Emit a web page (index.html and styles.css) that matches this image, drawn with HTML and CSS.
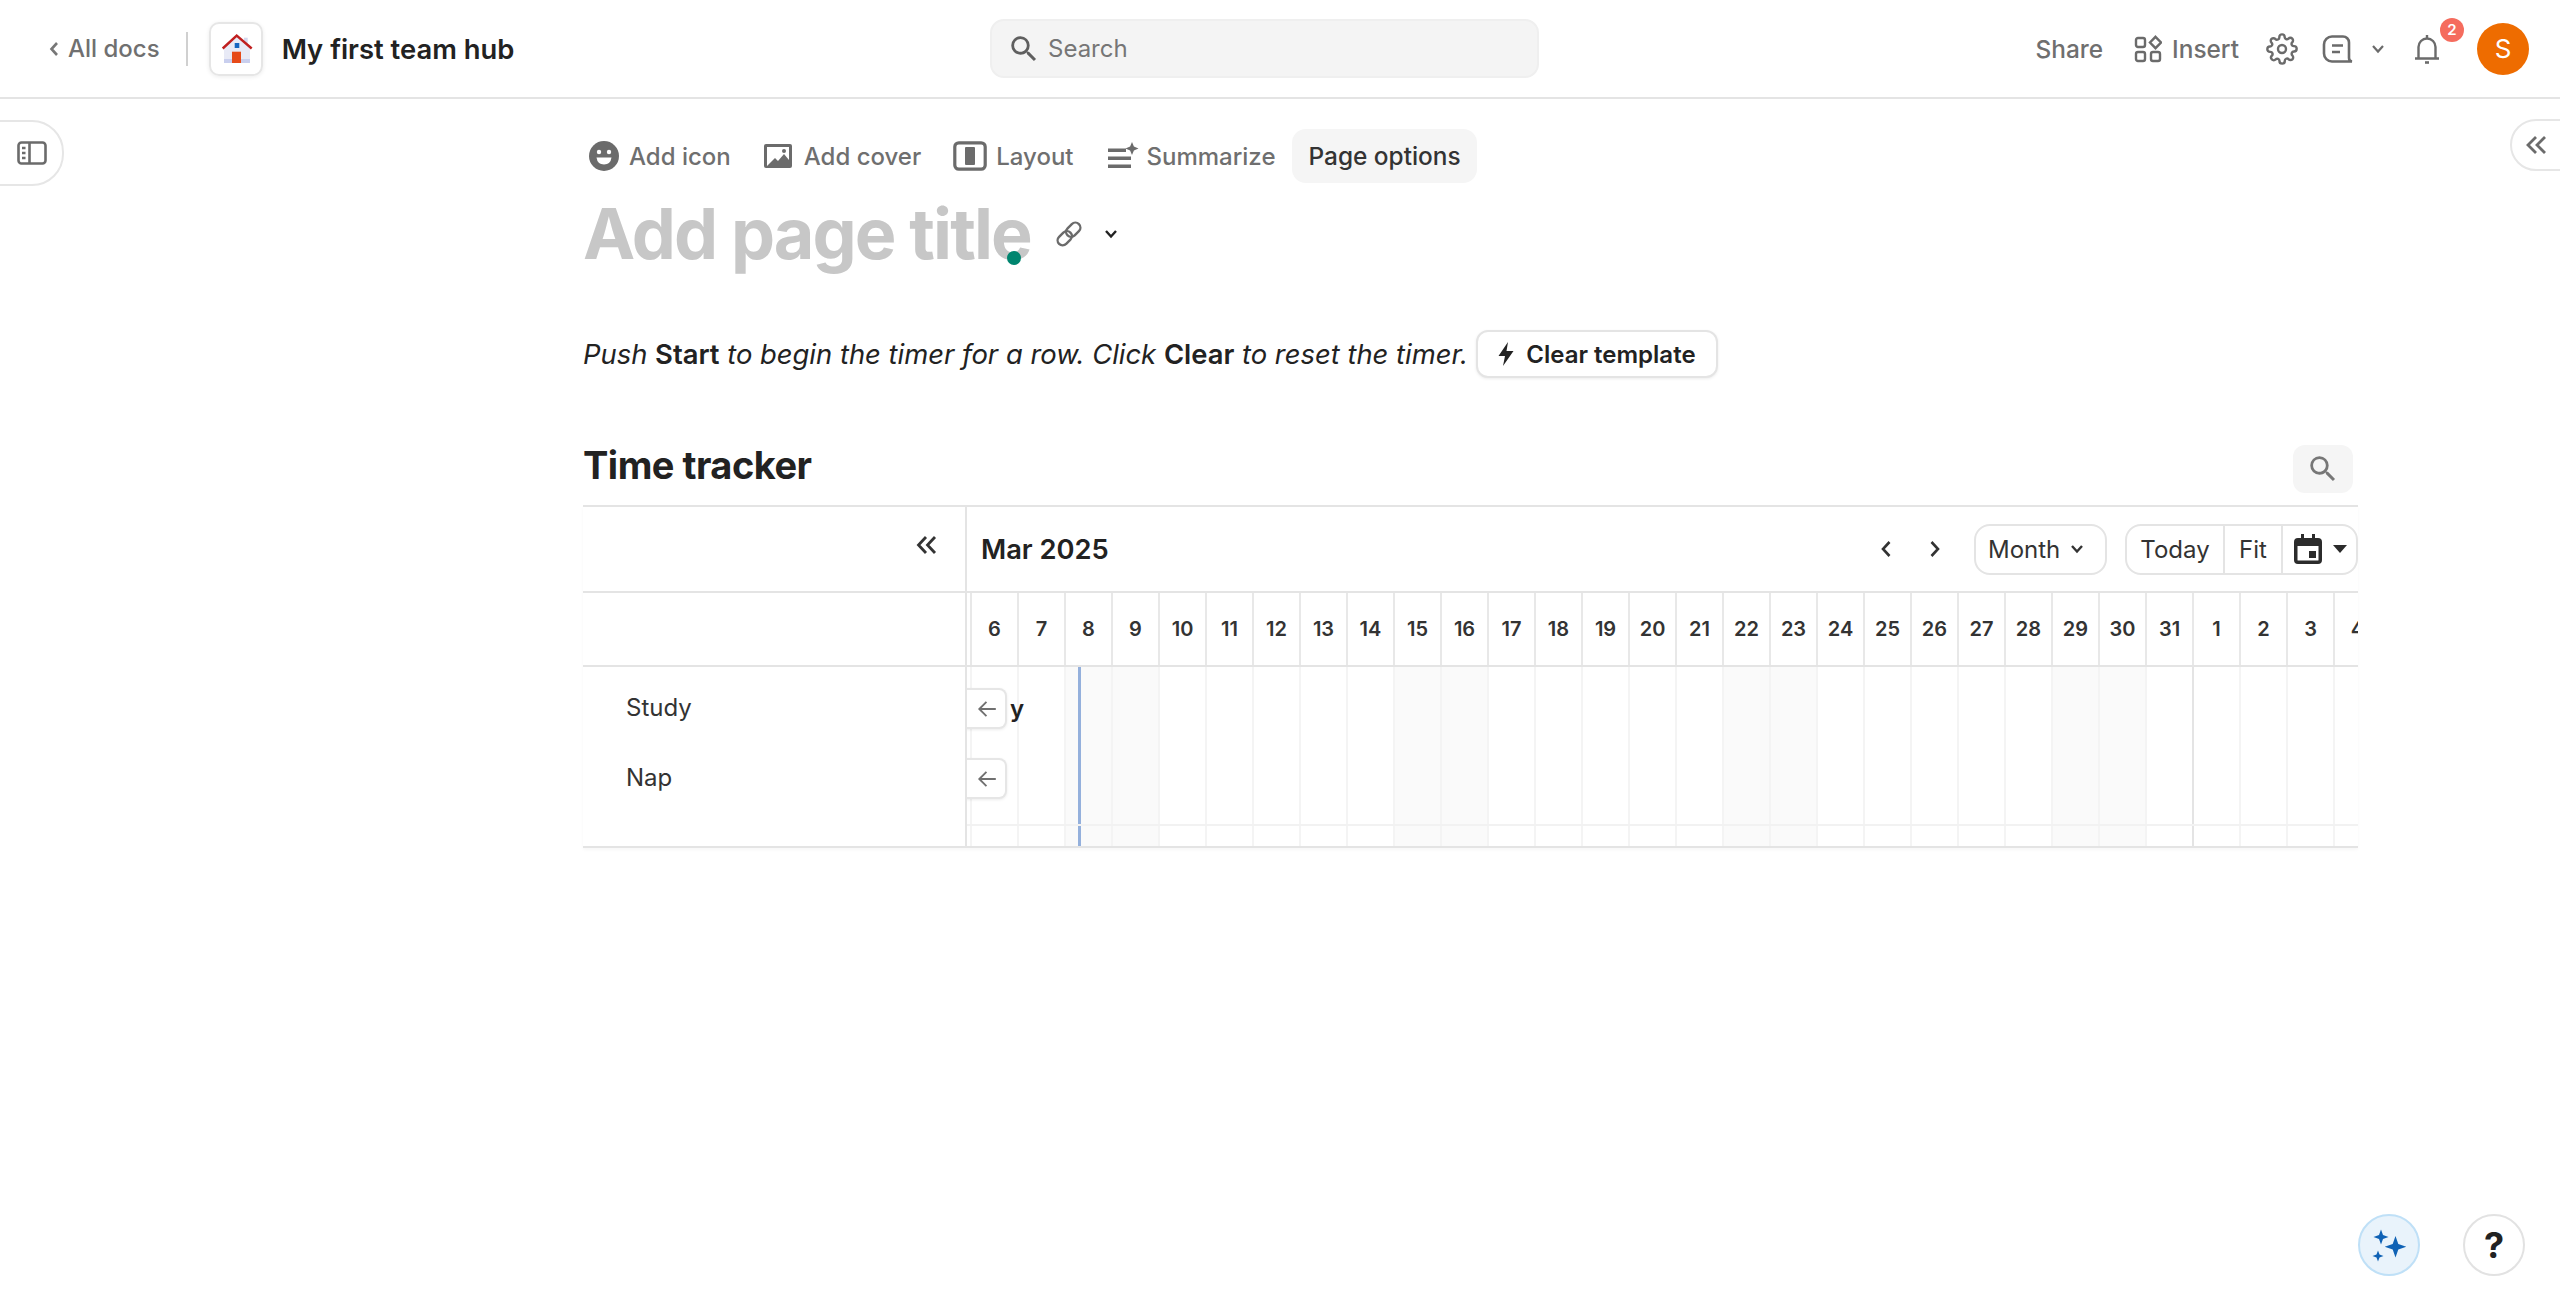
FILE: index.html
```html
<!DOCTYPE html>
<html lang="en">
<head>
  <title>Time tracker - My first team hub</title>
  <meta charset="utf-8">
  <link rel="stylesheet" href="styles.css">
</head>
<body>

<header class="topbar">
  <div class="top-left">
    <svg class="back-chev" width="12" height="18" viewBox="0 0 12 18"><path d="M9 3 L3.500 9 L9 15" fill="none" stroke="#777" stroke-width="2.600"/></svg>
    <span class="all-docs">All docs</span>
    <span class="top-sep"></span>
    <span class="doc-icon">
      <svg width="34" height="34" viewBox="0 0 34 34">
        <path d="M25 5.700h3.700V12H25z" fill="#d5d8ee"/>
        <path d="M5 16 L17.700 3 L31 16 V31 H5z" fill="#e8eaf6"/>
        <path d="M5 27h26v4H5z" fill="#c9cfee"/>
        <path d="M3.700 16.500 L17.700 3.500 L32.700 16.500" fill="none" stroke="#c01f1f" stroke-width="2.400"/>
        <path d="M15.700 11h4.600v5h-4.600z" fill="#1565c0"/>
        <path d="M13 19.700h9V31h-9z" fill="#e64a19"/>
      </svg>
    </span>
    <span class="doc-name">My first team hub</span>
  </div>

  <div class="top-search">
    <svg width="34" height="34" viewBox="0 0 24 24"><path d="M15.500 14h-.79l-.28-.27A6.470 6.470 0 0 0 16 9.500 6.500 6.500 0 1 0 9.500 16c1.610 0 3.090-.59 4.230-1.570l.27.28v.79l5 4.990L20.490 19l-4.990-5zm-6 0C7.010 14 5 11.990 5 9.500S7.010 5 9.500 5 14 7.010 14 9.500 11.990 14 9.500 14z" fill="#5f5f5f"/></svg>
    <span>Search</span>
  </div>

  <div class="top-right">
    <span class="share">Share</span>
    <span class="insert">
      <svg width="28" height="28" viewBox="0 0 28 28" fill="none" stroke="#6b6b6b" stroke-width="2.400">
        <rect x="2" y="3" width="9" height="9" rx="2"/>
        <rect x="2" y="17" width="9" height="9" rx="2"/>
        <rect x="17" y="17" width="9" height="9" rx="2"/>
        <path d="M21.500 1.800 L27 7.500 L21.500 13.200 L16 7.500z"/>
      </svg>
      Insert
    </span>
    <svg class="gear" width="32" height="32" viewBox="0 0 24 24" fill="none" stroke="#6b6b6b" stroke-width="1.800" stroke-linejoin="round"><circle cx="12" cy="12" r="3"/><path d="M19.400 15a1.650 1.650 0 0 0 .33 1.820l.06.06a2 2 0 1 1-2.830 2.830l-.06-.06a1.650 1.650 0 0 0-2.800 1.170V21a2 2 0 1 1-4 0v-.09a1.650 1.650 0 0 0-2.800-1.120l-.06.06a2 2 0 1 1-2.830-2.830l.06-.06a1.650 1.650 0 0 0-1.120-2.800H3a2 2 0 1 1 0-4h.09a1.650 1.650 0 0 0 1.120-2.800l-.06-.06a2 2 0 1 1 2.830-2.830l.06.06a1.650 1.650 0 0 0 1.820.33H9a1.650 1.650 0 0 0 1-1.510V3a2 2 0 1 1 4 0v.09a1.650 1.650 0 0 0 2.800 1.120l.06-.06a2 2 0 1 1 2.830 2.830l-.06.06a1.650 1.650 0 0 0 1.120 2.800H21a2 2 0 1 1 0 4h-.09a1.650 1.650 0 0 0-1.510 1z"/></svg>
    <svg class="comment" width="32" height="28" viewBox="0 0 32 28" fill="none" stroke="#6b6b6b" stroke-width="2.600"><path d="M10 1.500h11a6 6 0 0 1 6 6V23q0 3 3 3.500H10a8 8 0 0 1-8-8V9.500a8 8 0 0 1 8-8z"/><path d="M10 10.500h11M10 17h8"/></svg>
    <svg class="small-chev" width="14" height="10" viewBox="0 0 14 10"><path d="M2 2 L7 7.500 L12 2" fill="none" stroke="#6b6b6b" stroke-width="2.200"/></svg>
    <span class="bell">
      <svg width="26" height="30" viewBox="0 0 26 30" fill="none" stroke="#6b6b6b" stroke-width="2.400"><path d="M1 24.500h24M4.500 24.500V13a8.500 8.500 0 0 1 17 0v11.500"/><path d="M13 1v3"/><path d="M11 28.500h4" stroke-width="2.600"/></svg>
      <span class="badge">2</span>
    </span>
    <span class="avatar">S</span>
  </div>
</header>

<button class="side-tab side-tab-left">
  <svg width="30" height="24" viewBox="0 0 30 24" fill="none" stroke="#6b6b6b" stroke-width="2.600"><rect x="1.500" y="1.500" width="27" height="21" rx="3"/><path d="M12.500 1.500v21"/><path d="M5 7h3.500M5 12h3.500M5 17h3.500"/></svg>
</button>
<button class="side-tab side-tab-right">
  <svg width="24" height="20" viewBox="0 0 24 20" fill="none" stroke="#6b6b6b" stroke-width="2.800"><path d="M11 2 L3 10 L11 18M20 2 L12 10 L20 18"/></svg>
</button>

<main class="page">
  <nav class="page-tools">
    <span class="tool tool-icon">
      <svg width="30" height="30" viewBox="0 0 30 30"><circle cx="15" cy="15" r="15" fill="#6b6b6b"/><circle cx="10" cy="11" r="2.200" fill="#fff"/><circle cx="20" cy="11" r="2.200" fill="#fff"/><path d="M7.500 16.500h15q-1 7-7.500 7t-7.500-7z" fill="#fff"/></svg>
      Add icon
    </span>
    <span class="tool tool-cover">
      <svg width="30" height="26" viewBox="0 0 30 26"><path d="M3 1h24a2 2 0 0 1 2 2v20a2 2 0 0 1-2 2H3a2 2 0 0 1-2-2V3a2 2 0 0 1 2-2z" fill="#6b6b6b"/><path d="M4 4h22v13l-5-6-6 7-3-3-8 8z" fill="#fff"/><circle cx="21" cy="8" r="2" fill="#6b6b6b"/></svg>
      Add cover
    </span>
    <span class="tool tool-layout">
      <svg width="34" height="30" viewBox="0 0 34 30" fill="none"><rect x="1.800" y="1.800" width="30.400" height="26.400" rx="4" stroke="#6b6b6b" stroke-width="3.200"/><rect x="12" y="6" width="10" height="18" rx="1" fill="#6b6b6b"/></svg>
      Layout
    </span>
    <span class="tool tool-sum">
      <svg width="32" height="28" viewBox="0 0 32 28" fill="#6b6b6b"><path d="M1 6.500h18V10H1zM1 14.500h23V18H1zM1 22.500h23V26H1z"/><path d="M25 0l1.900 4.600L31.500 6.500l-4.600 1.900L25 13l-1.900-4.600L18.500 6.500l4.600-1.900z"/></svg>
      Summarize
    </span>
    <span class="tool tool-active">Page options</span>
  </nav>

  <div class="title-row">
    <h1 class="page-title">Add page title<span class="caret-dot"></span></h1>
    <svg class="title-link" width="30" height="30" viewBox="0 0 30 30" fill="none" stroke="#6b6b6b" stroke-width="2.400"><g transform="rotate(-45 15 15)"><rect x="1" y="10" width="16" height="10" rx="5"/><rect x="13" y="10" width="16" height="10" rx="5"/></g></svg>
    <svg class="title-chev" width="14" height="10" viewBox="0 0 14 10"><path d="M2 2 L7 7.500 L12 2" fill="none" stroke="#222" stroke-width="2.400"/></svg>
  </div>

  <div class="intro">
    <p><em>Push <b>Start</b> to begin the timer for a row. Click <b>Clear</b> to reset the timer.</em></p>
    <button class="clear-btn">
      <svg width="16" height="24" viewBox="0 0 16 24"><path d="M10 0 L0.500 14 H7 L5 24 L15.500 9 H8.500z" fill="#222"/></svg>
      Clear template
    </button>
  </div>

  <section class="tracker">
    <div class="tracker-head">
      <h2>Time tracker</h2>
      <span class="tracker-search">
        <svg width="34" height="34" viewBox="0 0 24 24"><path d="M15.500 14h-.79l-.28-.27A6.470 6.470 0 0 0 16 9.500 6.500 6.500 0 1 0 9.500 16c1.610 0 3.090-.59 4.230-1.570l.27.28v.79l5 4.990L20.490 19l-4.990-5zm-6 0C7.010 14 5 11.990 5 9.500S7.010 5 9.500 5 14 7.010 14 9.500 11.990 14 9.500 14z" fill="#777"/></svg>
      </span>
    </div>

    <div class="gantt">
      <div class="gantt-left">
        <div class="left-head">
          <svg width="22" height="20" viewBox="0 0 22 20" fill="none" stroke="#333" stroke-width="2.800"><path d="M10 2 L2.500 10 L10 18M19 2 L11.500 10 L19 18"/></svg>
        </div>
        <div class="left-days"></div>
        <div class="left-rows">
          <div class="left-row">Study</div>
          <div class="left-row">Nap</div>
        </div>
      </div>

      <div class="gantt-right">
        <div class="gantt-bar">
          <span class="month-label">Mar 2025</span>
          <svg class="nav-chev" width="14" height="20" viewBox="0 0 14 20"><path d="M10.500 3 L4 10 L10.500 17" fill="none" stroke="#333" stroke-width="2.600"/></svg>
          <svg class="nav-chev nav-next" width="14" height="20" viewBox="0 0 14 20"><path d="M3.500 3 L10 10 L3.500 17" fill="none" stroke="#333" stroke-width="2.600"/></svg>
          <span class="bar-btn month-btn">Month
            <svg width="14" height="10" viewBox="0 0 14 10"><path d="M2 2 L7 7.500 L12 2" fill="none" stroke="#333" stroke-width="2.400"/></svg>
          </span>
          <span class="bar-btn btn-group">
            <span class="seg seg-today">Today</span>
            <span class="seg seg-fit">Fit</span>
            <span class="seg seg-cal">
              <svg width="28" height="30" viewBox="0 0 28 30"><path d="M7 0h3v4h8V0h3v4h3a4 4 0 0 1 4 4v18a4 4 0 0 1-4 4H4a4 4 0 0 1-4-4V8a4 4 0 0 1 4-4h3zM3.500 12v14a.5.5 0 0 0 .5.500h20a.5.5 0 0 0 .5-.5V12zM15 17h7v7h-7z" fill="#2b2b2b"/></svg>
              <svg width="16" height="9" viewBox="0 0 16 9"><path d="M1 0h14l-7 8z" fill="#2b2b2b"/></svg>
            </span>
          </span>
        </div>

        <div class="days">
          <span>6</span><span>7</span><span>8</span><span>9</span><span>10</span><span>11</span><span>12</span><span>13</span><span>14</span><span>15</span><span>16</span><span>17</span><span>18</span><span>19</span><span>20</span><span>21</span><span>22</span><span>23</span><span>24</span><span>25</span><span>26</span><span>27</span><span>28</span><span>29</span><span>30</span><span>31</span><span class="month-start">1</span><span>2</span><span>3</span><span>4</span>
        </div>

        <div class="grid">
          <i></i><i></i><i class="off"></i><i class="off"></i><i></i><i></i><i></i><i></i><i></i><i class="off"></i><i class="off"></i><i></i><i></i><i></i><i></i><i></i><i class="off"></i><i class="off"></i><i></i><i></i><i></i><i></i><i></i><i class="off"></i><i class="off"></i><i></i><i class="month-start"></i><i></i><i></i><i></i>
          <span class="today-line"></span>
          <span class="grid-foot"></span>
          <span class="bar-label">y</span>
          <button class="jump jump-study"><svg width="22" height="22" viewBox="0 0 20 20" fill="none" stroke="#707070" stroke-width="1.700"><path d="M18 10H3M9.500 3.500 L3 10 L9.500 16.500"/></svg></button>
          <button class="jump jump-nap"><svg width="22" height="22" viewBox="0 0 20 20" fill="none" stroke="#707070" stroke-width="1.700"><path d="M18 10H3M9.500 3.500 L3 10 L9.500 16.500"/></svg></button>
        </div>
      </div>
    </div>
  </section>
</main>

<button class="float-btn float-ai">
  <svg width="38" height="36" viewBox="0 0 38 36" fill="#0f62b5"><path d="M25.500 9l2.800 8 8 2.700-8 2.800-2.800 8-2.800-8-8-2.800 8-2.700zM11 2.500l2 5.500 5.500 2-5.500 2-2 5.500-2-5.500-5.500-2 5.500-2zM8 23.500l1.500 4 4 1.500-4 1.500-1.500 4-1.500-4-4-1.500 4-1.500z"/></svg>
</button>
<button class="float-btn float-help">?</button>

</body>
</html>
```

FILE: styles.css
```css
html {
  height: 100%;
}
body {
  margin: 0;
  height: 1314px;
  overflow: hidden;
  background: #ffffff;
  color: #222222;
  font-family: Inter, "Noto Sans", sans-serif;
  font-size: 24px;
}

button {
  font-family: inherit;
  padding: 0;
  background: #fff;
  cursor: pointer;
}

/* top bar */

.topbar {
  height: 97px;
  border-bottom: 2px solid #e4e4e4;
  display: flex;
  align-items: center;
  position: relative;
}

.top-left {
  display: flex;
  align-items: center;
  padding-left: 48px;
  width: 990px;
  box-sizing: border-box;
}

.back-chev {
  margin-right: 8px;
}

.all-docs {
  font-weight: 500;
  color: #707070;
}

.top-sep {
  width: 2px;
  height: 34px;
  background: #d0d0d0;
  margin: 0 21px 0 26px;
}

.doc-icon {
  width: 54px;
  height: 54px;
  box-sizing: border-box;
  border: 2px solid #e6e6e6;
  border-radius: 10px;
  box-shadow: 0 1px 4px rgba(0,0,0,0.08);
  display: flex;
  align-items: center;
  justify-content: center;
}

.doc-name {
  font-size: 27.4px;
  font-weight: 600;
  margin-left: 19px;
}

.top-search {
  width: 549px;
  height: 59px;
  box-sizing: border-box;
  background: #f4f4f4;
  border: 2px solid #efefef;
  border-radius: 14px;
  display: flex;
  align-items: center;
  gap: 7px;
  padding-left: 15px;
  color: #767676;
}

.top-right {
  flex: 1;
  display: flex;
  align-items: center;
  justify-content: flex-end;
  padding-right: 31px;
  color: #6f6f6f;
  font-size: 24.4px;
  font-weight: 500;
}

.share {
  margin-right: 31px;
}

.insert {
  display: flex;
  align-items: center;
  gap: 10px;
  margin-right: 27px;
}

.comment {
  margin-left: 24px;
}

.small-chev {
  margin-left: 17px;
}

.bell {
  margin-left: 29px;
  display: flex;
  position: relative;
}

.badge {
  position: absolute;
  top: -16px;
  left: 26px;
  width: 24px;
  height: 24px;
  border-radius: 50%;
  background: #f56c5e;
  color: #fff;
  font-size: 15px;
  font-weight: 600;
  line-height: 24px;
  text-align: center;
}

.avatar {
  margin-left: 37px;
  width: 52px;
  height: 52px;
  border-radius: 50%;
  background: #ee6c00;
  color: #fff;
  font-size: 26px;
  font-weight: 400;
  line-height: 52px;
  text-align: center;
}

/* side tabs */

.side-tab {
  position: absolute;
  border: 2px solid #e6e6e6;
  display: flex;
  align-items: center;
}

.side-tab-left {
  top: 120px;
  left: -2px;
  width: 66px;
  height: 66px;
  border-radius: 0 32px 32px 0;
  padding-left: 17px;
}

.side-tab-right {
  top: 119px;
  left: 2510px;
  width: 60px;
  height: 52px;
  border-radius: 26px 0 0 26px;
  padding-left: 13px;
}

/* page */

.page {
  margin-left: 583px;
  width: 1775px;
}

.page-tools {
  display: flex;
  align-items: center;
  height: 54px;
  margin-top: 30px;
  color: #6f6f6f;
  font-size: 24px;
  font-weight: 500;
}

.tool {
  display: flex;
  align-items: center;
  gap: 11px;
}

.tool-icon {
  margin-left: 6px;
  gap: 10px;
}

.tool-cover {
  margin-left: 32px;
}

.tool-layout {
  margin-left: 32px;
  gap: 9px;
}

.tool-sum {
  margin-left: 33px;
  gap: 8px;
}

.tool-active {
  margin-left: 17px;
  height: 54px;
  padding: 0 16px;
  background: #f5f5f5;
  border-radius: 14px;
  color: #333;
  font-size: 24.4px;
}

.title-row {
  display: flex;
  align-items: center;
  height: 86px;
  margin-top: 8px;
}

.page-title {
  margin: 0;
  position: relative;
  font-size: 70px;
  font-weight: 700;
  letter-spacing: -1.9px;
  color: #c7c7c7;
  line-height: 86px;
}

.caret-dot {
  position: absolute;
  right: 10px;
  top: 60px;
  width: 14px;
  height: 14px;
  border-radius: 50%;
  background: #00856f;
}

.title-link {
  margin-left: 23px;
}

.title-chev {
  margin-left: 20px;
}

.intro {
  display: flex;
  align-items: center;
  gap: 8px;
  height: 48px;
  margin-top: 53px;
}

.intro p {
  margin: 0;
  font-size: 27.4px;
}

.intro b {
  font-style: normal;
  font-weight: 600;
}

.clear-btn {
  width: 242px;
  height: 48px;
  border: 2px solid #e4e4e4;
  border-radius: 12px;
  box-shadow: 0 1px 3px rgba(0,0,0,0.08);
  display: flex;
  align-items: center;
  justify-content: center;
  gap: 12px;
  color: #222;
  font-size: 24px;
  font-weight: 600;
}

.tracker {
  margin-top: 67px;
}

.tracker-head {
  display: flex;
  align-items: center;
  justify-content: space-between;
  height: 48px;
  margin-bottom: 12px;
}

.tracker-head h2 {
  margin: 0 0 8px;
  font-size: 38px;
  font-weight: 700;
  letter-spacing: -0.5px;
}

.tracker-search {
  width: 60px;
  height: 48px;
  margin-right: 5px;
  background: #f5f5f5;
  border-radius: 12px;
  display: flex;
  align-items: center;
  justify-content: center;
}

/* gantt */

.gantt {
  display: flex;
  border-top: 2px solid #e4e4e4;
  border-bottom: 2px solid #e4e4e4;
  box-shadow: 0 2px 3px rgba(0,0,0,0.03);
}

.gantt-left {
  width: 382px;
  border-right: 2px solid #e4e4e4;
  flex: none;
}

.left-head {
  height: 86px;
  border-bottom: 2px solid #e4e4e4;
  display: flex;
  justify-content: flex-end;
  padding: 28px 27px 0 0;
  box-sizing: border-box;
}

.left-days {
  height: 72px;
  border-bottom: 2px solid #e4e4e4;
}

.left-rows {
  height: 179px;
  padding-top: 6px;
  box-sizing: border-box;
  color: #333;
}

.left-row {
  height: 70px;
  line-height: 70px;
  padding-left: 43px;
}

.gantt-right {
  flex: 1;
  min-width: 0;
  overflow: hidden;
}

.gantt-bar {
  height: 86px;
  border-bottom: 2px solid #e4e4e4;
  display: flex;
  align-items: center;
  padding-left: 14px;
  box-sizing: border-box;
}

.month-label {
  font-size: 27.3px;
  font-weight: 600;
  margin-right: auto;
}

.nav-chev {
  margin-right: 15px;
}

.nav-next {
  margin-left: 20px;
  margin-right: 32px;
}

.bar-btn {
  display: flex;
  align-items: center;
  height: 51px;
  box-sizing: border-box;
  border: 2px solid #e4e4e4;
  border-radius: 16px;
  color: #333;
}

.month-btn {
  width: 133px;
  padding-left: 12px;
  gap: 10px;
  margin-right: 18px;
}

.btn-group {
  width: 233px;
}

.seg {
  height: 100%;
  display: flex;
  align-items: center;
  justify-content: center;
  box-sizing: border-box;
}

.seg-today {
  width: 98px;
  border-right: 2px solid #e4e4e4;
}

.seg-fit {
  width: 58px;
  border-right: 2px solid #e4e4e4;
}

.seg-cal {
  flex: 1;
  gap: 10px;
  padding-left: 2px;
}

.days {
  display: flex;
  height: 72px;
  padding-left: 3px;
  border-bottom: 2px solid #e4e4e4;
}

.days span {
  flex: none;
  width: 47px;
  box-sizing: border-box;
  border-left: 2px solid #e8e8e8;
  font-size: 20px;
  font-weight: 600;
  color: #333;
  line-height: 72px;
  text-align: center;
}

.grid {
  display: flex;
  height: 179px;
  padding-left: 3px;
  position: relative;
}

.grid i {
  flex: none;
  width: 47px;
  box-sizing: border-box;
  border-left: 2px solid #f4f4f4;
}

.grid i.off {
  background: #fafafa;
}

.grid i.month-start {
  border-left-color: #e4e4e4;
}

.grid-foot {
  position: absolute;
  left: 0;
  right: 0;
  top: 157px;
  height: 2px;
  background: #f2f2f2;
}

.today-line {
  position: absolute;
  left: 111px;
  top: 0;
  width: 3px;
  height: 179px;
  background: #94b0dc;
}

.bar-label {
  position: absolute;
  left: 43px;
  top: 27px;
  font-weight: 600;
  line-height: 30px;
}

.jump {
  position: absolute;
  left: -1px;
  width: 41px;
  height: 41px;
  padding-left: 3px;
  border: 2px solid #e6e6e6;
  border-left: none;
  border-radius: 0 8px 8px 0;
  box-shadow: 0 1px 3px rgba(0,0,0,0.08);
  display: flex;
  align-items: center;
  justify-content: center;
}

.jump-study {
  top: 21px;
}

.jump-nap {
  top: 91px;
}

/* floating buttons */

.float-btn {
  position: absolute;
  top: 1214px;
  width: 62px;
  height: 62px;
  border-radius: 50%;
  box-sizing: border-box;
  display: flex;
  align-items: center;
  justify-content: center;
}

.float-ai {
  left: 2358px;
  background: #e9f3fb;
  border: 2px solid #bfe0f7;
}

.float-help {
  left: 2463px;
  border: 2px solid #e2e2e2;
  color: #222;
  font-size: 36px;
  font-weight: 700;
}
```
